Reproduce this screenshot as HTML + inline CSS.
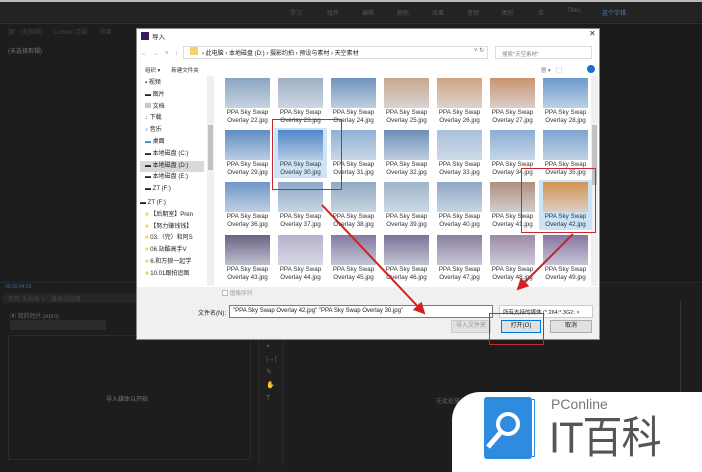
<!DOCTYPE html>
<html><head><meta charset="utf-8"><style>
*{margin:0;padding:0;box-sizing:border-box}
body{width:702px;height:465px;overflow:hidden;background:#1d1d1d;font-family:"Liberation Sans","Noto Sans CJK SC",sans-serif;position:relative}
.a{position:absolute}
.t{font-size:6px;color:#555}
.th{position:absolute;width:45px;height:30px}
.lb{position:absolute;width:53px;font-size:6.3px;line-height:8px;color:#333;text-align:center}
.btn{position:absolute;height:13px;border:1px solid #adadad;background:#e1e1e1;font-size:6px;text-align:center;line-height:11px;color:#222}
</style></head><body>
<div class="a" style="left:0;top:0;width:702px;height:2px;background:#bbb"></div>
<div class="a" style="left:0;top:2px;width:702px;height:20px;background:#232323"></div>
<div class="a t" style="top:8px;left:290px">学习</div>
<div class="a t" style="top:8px;left:327px">组件</div>
<div class="a t" style="top:8px;left:362px">编辑</div>
<div class="a t" style="top:8px;left:397px">颜色</div>
<div class="a t" style="top:8px;left:432px">效果</div>
<div class="a t" style="top:8px;left:467px">音频</div>
<div class="a t" style="top:8px;left:502px">图形</div>
<div class="a t" style="top:8px;left:538px">库</div>
<div class="a t" style="top:8px;left:567px">Titles</div>
<div class="a t" style="top:8px;left:602px;color:#4a7ec0">这个字错</div>
<div class="a" style="left:0;top:23px;width:702px;height:1px;background:#2e2e2e"></div>
<div class="a t" style="top:27px;left:8px;color:#444">源：(无剪辑)　　Lumetri 范围　　效果</div>
<div class="a t" style="top:46px;left:8px;color:#777">(未选择剪辑)</div>
<div class="a" style="left:600px;top:24px;width:102px;height:260px;background:#1a1a1a"></div>
<div class="a" style="left:0;top:282px;width:702px;height:1px;background:#2a2a2a"></div>
<div class="a t" style="top:284px;left:5px;color:#3d6a96;font-size:5px">00:00:04:23</div>
<div class="a" style="left:3px;top:293px;width:255px;height:10px;background:#262626"></div>
<div class="a t" style="top:294px;left:8px;color:#444">项目:未命名 ≡　媒体浏览器</div>
<div class="a t" style="top:311px;left:10px;color:#666">▣ 我的短片.prproj</div>
<div class="a" style="left:10px;top:320px;width:96px;height:10px;background:#2a2a2a"></div>
<div class="a" style="left:8px;top:335px;width:243px;height:125px;border:1px solid #2a2a2a"></div>
<div class="a t" style="top:394px;left:106px;color:#777">导入媒体以开始</div>
<div class="a" style="left:258px;top:283px;width:26px;height:182px;background:#1f1f1f;border-left:1px solid #2b2b2b;border-right:1px solid #2b2b2b"></div>
<div class="a t" style="top:340px;left:266px;color:#666;line-height:13px;font-size:7px">⌖<br>|↔|<br>✎<br>✋<br>T</div>
<div class="a t" style="top:396px;left:436px;color:#666">在此处放</div>
<div class="a" style="left:680px;top:300px;width:22px;height:165px;border-left:1px solid #333"></div>

<div class="a" style="left:136px;top:28px;width:464px;height:312px;background:#fff;border:1px solid #888"></div>
<div class="a" style="left:141px;top:32px;width:8px;height:8px;background:#3a1a5a"></div>
<div class="a" style="left:152px;top:31px;font-size:6.5px;color:#222">导入</div>
<div class="a" style="left:589px;top:29px;font-size:8px;color:#333">✕</div>
<div class="a" style="left:141px;top:48px;font-size:6px;color:#888">←　→　˅　↑</div>
<div class="a" style="left:183px;top:46px;width:305px;height:13px;border:1px solid #ddd"></div>
<div class="a" style="left:190px;top:47px;width:8px;height:8px;background:#f2d46c"></div>
<div class="a" style="left:202px;top:48px;font-size:6px;color:#222">› 此电脑 › 本地磁盘 (D:) › 摄影约拍 › 预设与素材 › 天空素材</div>
<div class="a" style="left:474px;top:47px;font-size:6px;color:#666">˅ ↻</div>
<div class="a" style="left:495px;top:46px;width:97px;height:13px;border:1px solid #ddd;font-size:5.5px;color:#888;padding:3px 6px">搜索"天空素材"</div>
<div class="a" style="left:145px;top:66px;font-size:5.5px;color:#333">组织 ▾　　新建文件夹</div>
<div class="a" style="left:541px;top:66px;font-size:5.5px;color:#668">▦ ▾　▢</div>
<div class="a" style="left:587px;top:65px;width:8px;height:8px;border-radius:50%;background:#1a6fd0"></div>
<div class="a" style="left:140px;top:78px;font-size:6px;color:#222;line-height:11.8px">
<div>&nbsp;&nbsp;&nbsp;▪ 视频</div><div>&nbsp;&nbsp;&nbsp;▬ 图片</div><div>&nbsp;&nbsp;&nbsp;▤ 文档</div><div>&nbsp;&nbsp;&nbsp;<span style="color:#2a6fd0">↓</span> 下载</div><div>&nbsp;&nbsp;&nbsp;<span style="color:#2a6fd0">♪</span> 音乐</div><div>&nbsp;&nbsp;&nbsp;<span style="color:#2a8fd0">▬</span> 桌面</div><div>&nbsp;&nbsp;&nbsp;▬ 本地磁盘 (C:)</div><div style="background:#d9d9d9;width:64px">&nbsp;&nbsp;&nbsp;▬ 本地磁盘 (D:)</div><div>&nbsp;&nbsp;&nbsp;▬ 本地磁盘 (E:)</div><div>&nbsp;&nbsp;&nbsp;▬ ZT (F:)</div><div style="margin-top:2px">▬ ZT (F:)</div>
<div>&nbsp;&nbsp;&nbsp;<span style="color:#f2d46c">■</span> 【后期室】Pren</div><div>&nbsp;&nbsp;&nbsp;<span style="color:#f2d46c">■</span> 【努力赚钱钱】</div><div>&nbsp;&nbsp;&nbsp;<span style="color:#f2d46c">■</span> 03.（完）和阿S</div><div>&nbsp;&nbsp;&nbsp;<span style="color:#f2d46c">■</span> 06.站酷高手V</div><div>&nbsp;&nbsp;&nbsp;<span style="color:#f2d46c">■</span> 6.和万狼一起学</div><div>&nbsp;&nbsp;&nbsp;<span style="color:#f2d46c">■</span> 10.01跟拍追图</div></div>
<div class="a" style="left:207px;top:76px;width:7px;height:210px;background:#f0f0f0"></div>
<div class="a" style="left:208px;top:125px;width:5px;height:45px;background:#c2c2c2"></div>
<div class="a" style="left:591px;top:76px;width:7px;height:210px;background:#f0f0f0"></div>
<div class="a" style="left:592px;top:125px;width:5px;height:60px;background:#c2c2c2"></div>
<div id="g"></div>
<div class="a" style="left:137px;top:287px;width:462px;height:52px;background:#f0f0f0"></div>
<div class="a" style="left:222px;top:290px;width:6px;height:6px;border:1px solid #bbb;background:#fff"></div>
<div class="a" style="left:230px;top:289px;font-size:5.5px;color:#999">图像序列</div>
<div class="a" style="left:198px;top:308px;font-size:6px;color:#222">文件名(N):</div>
<div class="a" style="left:229px;top:305px;width:264px;height:13px;border:1px solid #7a7a7a;background:#fff;font-size:6px;color:#222;padding:2px 3px">"PPA Sky Swap Overlay 42.jpg" "PPA Sky Swap Overlay 30.jpg"</div>
<div class="a" style="left:499px;top:305px;width:94px;height:13px;border:1px solid #ccc;background:#fff;font-size:5.5px;color:#222;padding:2px 3px">所有支持的媒体 (*.264;*.3G2; ˅</div>
<div class="btn" style="left:451px;top:320px;width:40px;color:#999;border-color:#ccc">导入文件夹</div>
<div class="btn" style="left:501px;top:320px;width:40px;border:1px solid #0078d7">打开(O)</div>
<div class="btn" style="left:550px;top:320px;width:42px">取消</div>
<div class="a" style="left:272px;top:119px;width:70px;height:71px;border:1.5px solid #c8282a"></div>
<div class="a" style="left:521px;top:168px;width:75px;height:65px;border:1.5px solid #c8282a"></div>
<div class="a" style="left:489px;top:313px;width:55px;height:32px;border:1.5px solid #c8282a"></div>
<svg class="a" style="left:0;top:0" width="702" height="465"><defs><marker id="m" markerWidth="6" markerHeight="6" refX="5" refY="3" orient="auto"><path d="M0,0L6,3L0,6z" fill="#d02020"/></marker></defs>
<line x1="322" y1="205" x2="424" y2="313" stroke="#d02020" stroke-width="2" marker-end="url(#m)"/>
<line x1="573" y1="234" x2="518" y2="289" stroke="#d02020" stroke-width="2" marker-end="url(#m)"/></svg>
<div class="a" style="left:452px;top:392px;width:260px;height:80px;background:#fff;border-top-left-radius:28px"></div>
<div class="a" style="left:484px;top:397px;width:48px;height:62px;background:#2e8be0;border-radius:3px"></div>
<div class="a" style="left:532px;top:399px;width:3px;height:58px;border:1px solid #2e8be0;border-left:none"></div>
<svg class="a" style="left:484px;top:397px" width="48" height="62"><circle cx="24" cy="27" r="10" fill="none" stroke="#fff" stroke-width="4"/><line x1="17" y1="35" x2="4" y2="50" stroke="#fff" stroke-width="5"/></svg>
<div class="a" style="left:551px;top:396px;font-size:14px;color:#777">PConline</div>
<div class="a" style="left:549px;top:414px;font-size:40px;line-height:44px;color:#555;letter-spacing:-1px;transform:scaleY(1.1);transform-origin:top left">IT百科</div>
<script>
var cols=[225,278,331,384,437,490,543],rows=[78,130,182,235];
var c=[['#8aa4c0','#9fb0c4','#6f93bd','#c9a78f','#d2a484','#c8946f','#6c98cc'],
['#5f8dc2','#4e86c8','#8fb1d6','#6d8fb6','#a8c0d9','#8aaed4','#7ca3cf'],
['#6f97c6','#8da9c8','#90a9c3','#9fb4cb','#8fa8c6','#b08f7e','#d29455'],
['#6b6283','#b8b2cc','#827aa0','#7a7396','#8a7e9c','#9c8aa6','#8676a0']];
var h='',n=22;
for(var r=0;r<4;r++)for(var k=0;k<7;k++){var x=cols[k],y=rows[r];
if((r==1&&k==1)||(r==2&&k==6))h+='<div class="a" style="left:'+(x-4)+'px;top:'+(y-2)+'px;width:53px;height:50px;background:#cce4f7"></div>';
h+='<div class="th" style="left:'+x+'px;top:'+y+'px;background:linear-gradient(180deg,'+c[r][k]+',#dfe6ee 140%)"></div>';
h+='<div class="lb" style="left:'+(x-4)+'px;top:'+(y+31)+'px">PPA Sky Swap<br>Overlay '+n+'.jpg</div>';n++;}
document.getElementById('g').outerHTML=h;
</script>
</body></html>
